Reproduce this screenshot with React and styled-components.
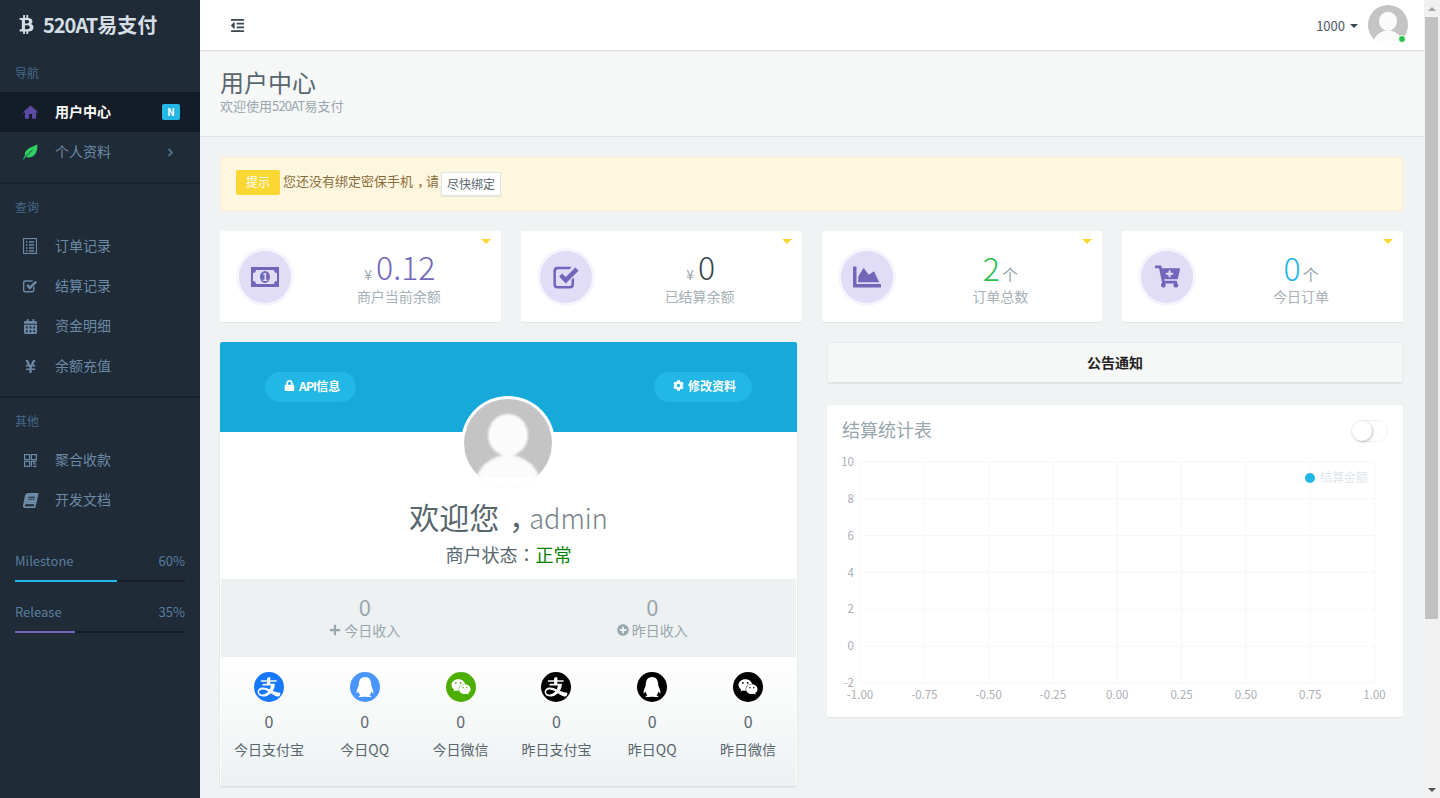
import React from "react";
import styled, { createGlobalStyle } from "styled-components";
import {
  FaBtc,
  FaCalendarAlt,
  FaYenSign,
  FaBook,
  FaAngleRight,
  FaOutdent,
  FaChartArea,
  FaCartPlus,
  FaLock,
  FaCog,
  FaPlus,
  FaPlusCircle,
  FaWeixin,
  FaQq,
} from "react-icons/fa";
import { MdHome } from "react-icons/md";
import { AiFillAlipayCircle } from "react-icons/ai";

const SANS = `"Noto Sans CJK SC", "Noto Sans", sans-serif`;

const GlobalStyle = createGlobalStyle`
  html, body { height: 100%; overflow: hidden; }
  body {
    margin: 0;
    background: #eff3f4;
    font-family: ${SANS};
    font-size: 14px;
    color: #58666e;
  }
`;

const Viewport = styled.div`
  display: flex;
  height: 100vh;
`;

const Page = styled.div`
  flex: 1;
  min-width: 0;
  overflow: hidden;
`;

const Layout = styled.div`
  display: flex;
  min-height: 1014px;
`;

/* fake window scrollbar */
const Rail = styled.div`
  width: 16px;
  flex: none;
  display: flex;
  flex-direction: column;
  align-items: center;
  background: #f1f1f1;
`;

const RailArrow = styled.span`
  height: 17px;
  flex: none;
  display: flex;
  align-items: center;
  &::before {
    content: "";
    border-left: 4px solid transparent;
    border-right: 4px solid transparent;
    border-bottom: ${(p) => (p.$up ? "4px solid #a3a3a3" : "none")};
    border-top: ${(p) => (p.$up ? "none" : "4px solid #505050")};
  }
`;

const RailThumb = styled.span`
  width: 13px;
  height: 602px;
  flex: none;
  margin-right: 1px;
  background: #c1c1c1;
`;

const RailSpace = styled.span`
  flex: 1;
`;

const Latin = styled.span`
  letter-spacing: ${(p) => p.$track || -0.8}px;
`;

/* sidebar */
const Sidebar = styled.aside`
  width: 200px;
  flex: none;
  background: #1f2b36;
  color: #6c89a6;
`;

const Logo = styled.div`
  height: 50px;
  box-sizing: border-box;
  padding: 0 0 2px 17px;
  display: flex;
  align-items: center;
  gap: 7px;
  font-size: 20px;
  font-weight: 700;
  color: #d5dee5;
  svg {
    font-size: 19px;
  }
`;

const NavLabel = styled.div`
  height: 42px;
  padding: 13px 0 0 15px;
  box-sizing: border-box;
  font-size: 12px;
  line-height: 20px;
  color: #47698a;
`;

const NavGroup = styled.nav`
  border-bottom: ${(p) => (p.$divider ? "2px solid #17212a" : "none")};
  padding-bottom: ${(p) => (p.$divider ? "10px" : "0")};
`;

const NavItem = styled.div`
  height: 40px;
  display: flex;
  align-items: center;
  background: ${(p) => (p.$active ? "#141d27" : "transparent")};
  color: ${(p) => (p.$active ? "#fff" : "#6c89a6")};
  font-weight: ${(p) => (p.$active ? 700 : 400)};
  font-size: 14px;
`;

const NavIcon = styled.span`
  width: 55px;
  flex: none;
  display: flex;
  justify-content: center;
  padding-left: 5px;
  box-sizing: border-box;
  color: ${(p) => p.$color || "#6c89a6"};
  font-size: 15px;
`;

const SlantedIcon = styled.span`
  display: flex;
  transform: skewX(-12deg);
`;

const NavText = styled.span`
  flex: 1;
  padding-bottom: 3px;
`;

const NavBadge = styled.span`
  width: 18px;
  height: 16px;
  margin-right: 20px;
  border-radius: 2px;
  background: #23b7e5;
  color: #fff;
  font-size: 10px;
  font-weight: 700;
  line-height: 16px;
  text-align: center;
`;

const NavArrow = styled.span`
  display: flex;
  margin-right: 23px;
  font-size: 13px;
  color: #4d6b88;
`;

const Progress = styled.div`
  padding: 0 15px;
  margin-bottom: 20px;
`;

const ProgressRow = styled.div`
  display: flex;
  justify-content: space-between;
  font-size: 13px;
  line-height: 20px;
  margin-bottom: 9px;
  color: #5a7d9f;
`;

const ProgressTrack = styled.div`
  height: 2px;
  background: #141d27;
`;

const ProgressFill = styled.div`
  height: 100%;
  background: ${(p) => p.$color};
`;

const Sidewidgets = styled.div`
  padding-top: 31px;
`;

/* main */
const Main = styled.main`
  flex: 1;
  min-width: 0;
`;

const Topbar = styled.header`
  height: 50px;
  background: #fff;
  box-shadow: 0 1px 2px rgba(0, 0, 0, 0.14);
  display: flex;
  align-items: center;
  padding: 0 16px 0 30px;
  position: relative;
`;

const MenuToggle = styled.span`
  display: flex;
  font-size: 15px;
  color: #3a4650;
  flex: 1;
`;

const UserName = styled.span`
  font-size: 13px;
  color: #4c5964;
`;

const Caret = styled.span`
  width: 0;
  height: 0;
  margin: 1px 10px 0 5px;
  border-left: 4px solid transparent;
  border-right: 4px solid transparent;
  border-top: 4px solid #3a4650;
`;

const TopAvatar = styled.span`
  position: relative;
  display: block;
  width: 40px;
  height: 40px;
`;

const OnlineDot = styled.span`
  position: absolute;
  right: 2px;
  bottom: 2px;
  width: 8px;
  height: 8px;
  border: 1px solid #fff;
  box-sizing: border-box;
  border-radius: 50%;
  background: #27c24c;
`;

const PageHeader = styled.div`
  height: 87px;
  box-sizing: border-box;
  background: #f6f8f8;
  border-bottom: 1px solid #dee5e7;
  padding: 16px 20px 0;
`;

const PageTitle = styled.h1`
  margin: 0;
  font-size: 24px;
  font-weight: 400;
  line-height: 32px;
  color: #58666e;
`;

const PageSub = styled.div`
  font-size: 13px;
  line-height: 15px;
  color: #98a6ad;
`;

const Content = styled.div`
  padding: 20px 21px 0 20px;
  display: flex;
  flex-direction: column;
  gap: 20px;
`;

const Alert = styled.div`
  height: 54px;
  box-sizing: border-box;
  display: flex;
  align-items: center;
  padding: 0 15px;
  border: 1px solid #fdeed0;
  border-radius: 3px;
  background: #fff6e0;
  color: #8a6d3b;
  font-size: 13px;
`;

const AlertText = styled.span`
  margin-bottom: 7px;
`;

const AlertTag = styled.span`
  width: 44px;
  height: 25px;
  margin-right: 3px;
  margin-top: -3px;
  border-radius: 2px;
  background: #fad733;
  color: #fff;
  font-size: 12px;
  line-height: 23px;
  text-align: center;
`;

const AlertButton = styled.span`
  margin-left: 2px;
  height: 22px;
  padding: 0 5px;
  border: 1px solid #dee5e7;
  background: #fff;
  color: #58666e;
  font-size: 12px;
  line-height: 22px;
  box-shadow: 0 1px 1px rgba(90, 90, 90, 0.1);
`;

/* the reference sets its comma in the middle of the cell, low on the line */
const Comma = styled.span`
  padding-left: 0.32em;
  letter-spacing: -0.32em;
`;

const Colon = styled.span`
  font-family: "Noto Sans CJK TC", sans-serif;
`;

const StatGrid = styled.div`
  display: grid;
  grid-template-columns: repeat(4, 1fr);
  gap: 20px;
`;

const StatCard = styled.div`
  position: relative;
  height: 91px;
  display: flex;
  align-items: center;
  padding-left: 19px;
  background: #fff;
  border-radius: 2px;
  box-shadow: 0 1px 1px rgba(0, 0, 0, 0.05);
`;

const StatFlag = styled.span`
  position: absolute;
  top: 8px;
  right: 10px;
  width: 0;
  height: 0;
  border-left: 5px solid transparent;
  border-right: 5px solid transparent;
  border-top: 5px solid #fad733;
`;

const StatCircle = styled.div`
  width: 52px;
  height: 52px;
  flex: none;
  border-radius: 50%;
  background: #e1ddf7;
  box-shadow: 0 0 0 3px #f6f5fd;
  color: #7266ba;
  display: flex;
  align-items: center;
  justify-content: center;
  font-size: 28px;
`;

const StatBody = styled.div`
  flex: 1;
  text-align: center;
  padding-left: 6px;
`;

const StatValue = styled.div`
  font-size: 32px;
  font-weight: 300;
  line-height: 36px;
  color: ${(p) => p.$color};
`;

const StatPrefix = styled.span`
  font-size: 14px;
  font-weight: 400;
  color: #98a6ad;
  margin: 0 4px 0 2px;
`;

const StatSuffix = styled.span`
  font-size: 16px;
  font-weight: 400;
  color: #98a6ad;
  margin-left: 2px;
`;

const StatLabel = styled.div`
  font-size: 14px;
  line-height: 18px;
  margin-top: -5px;
  color: #a6b0b6;
`;

const Columns = styled.div`
  display: grid;
  grid-template-columns: 577px 576px;
  gap: 30px;
  align-items: start;
`;

const ProfileCard = styled.section`
  position: relative;
  height: 444px;
  display: flex;
  flex-direction: column;
  background: #fff;
  box-shadow: 0 1px 2px rgba(0, 0, 0, 0.12);
  border-radius: 2px;
`;

const ProfileBanner = styled.div`
  height: 90px;
  flex: none;
  padding: 30px 45px 0;
  box-sizing: border-box;
  background: #17a9da;
  display: flex;
  justify-content: space-between;
  align-items: flex-start;
  border-radius: 2px 2px 0 0;
`;

const PillButton = styled.span`
  height: 30px;
  padding: 0 16px 3px 19px;
  box-sizing: border-box;
  display: flex;
  align-items: center;
  gap: 4px;
  border-radius: 15px;
  background: #23b7e5;
  color: #fff;
  font-size: 12px;
  font-weight: 700;
  svg {
    font-size: 11px;
  }
`;

const ProfileAvatar = styled.div`
  position: absolute;
  left: 241px;
  top: 54px;
  width: 94px;
  height: 94px;
  border-radius: 50%;
  background: #fff;
  padding: 3px;
  box-sizing: border-box;
  svg {
    display: block;
  }
`;

const Welcome = styled.div`
  margin-top: 64px;
  text-align: center;
  font-size: 30px;
  line-height: 40px;
  color: #58666e;
`;

const WelcomeName = styled.span`
  font-size: 27px;
  font-weight: 300;
  color: #76838b;
`;

const StatusLine = styled.div`
  text-align: center;
  font-size: 18px;
  line-height: 30px;
  margin-top: 1px;
  margin-bottom: 10px;
`;

const StatusOk = styled.span`
  color: #008000;
`;

const IncomeRow = styled.div`
  height: 78px;
  flex: none;
  margin: 0 1px;
  display: grid;
  grid-template-columns: 1fr 1fr;
  background: #edf1f2;
  text-align: center;
  color: #98a6ad;
`;

const IncomeCell = styled.div`
  padding-top: 15px;
`;

const IncomeValue = styled.div`
  font-size: 22px;
  line-height: 25px;
`;

const IncomeLabel = styled.div`
  display: flex;
  align-items: center;
  justify-content: center;
  gap: 3px;
  margin-top: 1px;
  font-size: 14px;
  line-height: 20px;
  svg {
    font-size: 12px;
  }
`;

const ChannelRow = styled.div`
  flex: 1;
  margin: 0 1px;
  display: grid;
  grid-template-columns: repeat(6, 1fr);
  background: linear-gradient(#fff, #edf1f2);
  text-align: center;
`;

const ChannelCell = styled.div`
  padding-top: 15px;
  display: flex;
  flex-direction: column;
  align-items: center;
`;

const ChannelDisc = styled.span`
  width: 30px;
  height: 30px;
  border-radius: 50%;
  display: flex;
  align-items: center;
  justify-content: center;
  overflow: hidden;
  background: ${(p) => (p.$cutout ? "transparent" : p.$color)};
  color: ${(p) => (p.$cutout ? p.$color : "#fff")};
  font-size: ${(p) => (p.$cutout ? 36 : 20)}px;
  svg {
    flex: none;
  }
`;

const ChannelValue = styled.div`
  font-size: 16px;
  line-height: 20px;
  margin-top: 9px;
`;

const ChannelLabel = styled.div`
  font-size: 14px;
  line-height: 20px;
  margin-top: 8px;
`;

const SideColumn = styled.div`
  display: flex;
  flex-direction: column;
  gap: 21px;
`;

const NoticeBar = styled.div`
  height: 42px;
  background: #f6f8f8;
  border: 1px solid #e4eaec;
  border-bottom: 2px solid #dee5e7;
  box-sizing: border-box;
  border-radius: 2px;
  text-align: center;
  font-size: 14px;
  font-weight: 700;
  line-height: 38px;
  color: #222;
`;

const ChartCard = styled.section`
  height: 312px;
  background: #fff;
  border-radius: 2px;
  box-shadow: 0 1px 1px rgba(0, 0, 0, 0.05);
`;

const ChartHead = styled.div`
  height: 44px;
  box-sizing: border-box;
  padding: 10px 15px 0;
  display: flex;
  justify-content: space-between;
  align-items: flex-start;
`;

const ChartTitle = styled.h3`
  margin: 0;
  font-size: 18px;
  font-weight: 400;
  line-height: 28px;
  color: #98a6ad;
`;

const Toggle = styled.span`
  position: relative;
  width: 37px;
  height: 22px;
  margin-top: 5px;
  box-sizing: border-box;
  border: 1px solid #eef0f1;
  border-radius: 11px;
  background: #fff;
`;

const ToggleKnob = styled.span`
  position: absolute;
  left: 0;
  top: 0;
  width: 20px;
  height: 20px;
  border-radius: 50%;
  background: #fff;
  box-shadow: 1px 1px 3px rgba(0, 0, 0, 0.25);
`;

const ChartSvg = styled.svg`
  display: block;
  font-family: ${SANS};
`;

/* drawings */
const AvatarPic = ({ size }) => (
  <svg width={size} height={size} viewBox="0 0 88 88">
    <defs>
      <clipPath id={`clip${size}`}>
        <circle cx="44" cy="44" r="44" />
      </clipPath>
      <filter id={`soft${size}`}>
        <feGaussianBlur stdDeviation="0.9" />
      </filter>
    </defs>
    <g clipPath={`url(#clip${size})`}>
      <rect width="88" height="88" fill="#c4c4c4" />
      <g filter={`url(#soft${size})`} fill="#fbfbfb">
        <ellipse cx="44" cy="36" rx="20" ry="21" />
        <ellipse cx="44" cy="88" rx="33" ry="32" />
      </g>
      <rect y="79" width="88" height="9" fill="#fff" />
    </g>
  </svg>
);

const CheckSquareIcon = ({ size }) => (
  <svg width={size} height={size} viewBox="0 0 28 28" fill="currentColor">
    <path d="M21 14.500v6a3.500 3.500 0 0 1-3.500 3.500h-11A3.500 3.500 0 0 1 3 20.500v-12A3.500 3.500 0 0 1 6.500 5h11c.5 0 1 .1 1.400.3l-1.900 1.900h-9.500A2.500 2.500 0 0 0 5.200 9.700v10.600a1.500 1.500 0 0 0 1.500 1.500h10.600a1.500 1.500 0 0 0 1.500-1.500v-3.800z" />
    <path d="M8 13.500l2.600-2.600 3.200 3.200L22.200 5.700l2.800 2.800-11.200 11.200z" />
  </svg>
);

const LeafIcon = () => (
  <svg width="15" height="16" viewBox="0 0 15 16" fill="currentColor">
    <path d="M14.500 0.500C14.500 8 12 13 6 13.500C4.500 13.600 3.500 13.200 2.800 12.600L0.900 15.500L0 15L2 11.500C0.800 6 7 3.500 14.500 0.500z" />
    <path d="M2.800 12.600L9.500 6" stroke="#1f2b36" strokeWidth="0.8" fill="none" />
  </svg>
);

const ListIcon = () => (
  <svg width="14" height="16" viewBox="0 0 14 16" fill="none" stroke="currentColor">
    <rect x="0.500" y="0.500" width="13" height="15" strokeWidth="1.200" />
    <path d="M3 4h1.500M6 4h5M3 7h1.500M6 7h5M3 10h1.500M6 10h5M3 13h1.500M6 13h5" strokeWidth="1.300" />
  </svg>
);

const QrIcon = () => (
  <svg width="13" height="13" viewBox="0 0 13 13" fill="none" stroke="currentColor" strokeWidth="1.200">
    <rect x="0.600" y="0.600" width="5" height="5" />
    <rect x="7.400" y="0.600" width="5" height="5" />
    <rect x="0.600" y="7.400" width="5" height="5" />
    <path d="M7.400 12.500V7.400h2.500v2.600h2.600M10.500 7.400h2M9 12.400h3.500" />
  </svg>
);

const MoneyIcon = () => (
  <svg width="28" height="20" viewBox="0 0 28 20">
    <rect width="28" height="20" fill="#7266ba" />
    <path d="M5 3h18a3 3 0 0 0 3 3v8a3 3 0 0 0-3 3H5a3 3 0 0 0-3-3V6a3 3 0 0 0 3-3z" fill="#e1ddf7" />
    <ellipse cx="14" cy="10" rx="5" ry="6" fill="#7266ba" />
    <text x="14" y="13.500" textAnchor="middle" fontSize="10" fontWeight="700" fill="#e1ddf7">
      1
    </text>
  </svg>
);

const X_LABELS = ["-1.00", "-0.75", "-0.50", "-0.25", "0.00", "0.25", "0.50", "0.75", "1.00"];
const Y_LABELS = ["10", "8", "6", "4", "2", "0", "-2"];

const SettleChart = () => {
  const left = 33;
  const right = 547.5;
  const top = 13;
  const bottom = 234;
  const stepX = (right - left) / 8;
  const stepY = (bottom - top) / 6;
  return (
    <ChartSvg width="576" height="268" viewBox="0 0 576 268">
      {X_LABELS.map((label, i) => (
        <g key={label}>
          <line x1={left + stepX * i} x2={left + stepX * i} y1={top} y2={bottom} stroke="#f5f6f7" />
          <text x={left + stepX * i} y={250} fontSize="11.5" textAnchor="middle" fill="#aaaeb4">
            {label}
          </text>
        </g>
      ))}
      {Y_LABELS.map((label, i) => (
        <g key={label}>
          <line x1={left} x2={right} y1={top + stepY * i} y2={top + stepY * i} stroke="#f5f6f7" />
          <text x={left - 6} y={top + stepY * i + 4} fontSize="11.5" textAnchor="end" fill="#aaaeb4">
            {label}
          </text>
        </g>
      ))}
      <circle cx="483" cy="29" r="5" fill="#23b7e5" />
      <text x="493" y="33" fontSize="12" fill="#e0e6ec">
        结算金额
      </text>
    </ChartSvg>
  );
};

const STATS = [
  { icon: <MoneyIcon />, prefix: "¥", value: "0.12", color: "#7266ba", label: "商户当前余额" },
  { icon: <CheckSquareIcon size={32} />, prefix: "¥", value: "0", color: "#3a4650", label: "已结算余额" },
  { icon: <FaChartArea />, value: "2", suffix: "个", color: "#27c24c", label: "订单总数" },
  { icon: <FaCartPlus size={25} />, value: "0", suffix: "个", color: "#23b7e5", label: "今日订单" },
];

const CHANNELS = [
  { kind: "ali", color: "#1677ff", label: "今日支付宝" },
  { kind: "qq", color: "#4a96ff", label: "今日QQ" },
  { kind: "wx", color: "#4caf00", label: "今日微信" },
  { kind: "ali", color: "#000", label: "昨日支付宝" },
  { kind: "qq", color: "#000", label: "昨日QQ" },
  { kind: "wx", color: "#000", label: "昨日微信" },
];

const ChannelIcon = ({ kind, color }) => {
  if (kind === "ali") {
    return (
      <ChannelDisc $cutout $color={color}>
        <AiFillAlipayCircle />
      </ChannelDisc>
    );
  }
  return <ChannelDisc $color={color}>{kind === "qq" ? <FaQq /> : <FaWeixin />}</ChannelDisc>;
};

export default function App() {
  return (
    <>
      <GlobalStyle />
      <Viewport>
        <Page>
          <Layout>
            <Sidebar>
              <Logo>
                <FaBtc />
                <span>
                  <Latin $track={-1}>520AT</Latin>易支付
                </span>
              </Logo>
              <NavGroup $divider>
                <NavLabel>导航</NavLabel>
                <NavItem $active>
                  <NavIcon $color="#5a4ba6">
                    <MdHome size={19} />
                  </NavIcon>
                  <NavText>用户中心</NavText>
                  <NavBadge>N</NavBadge>
                </NavItem>
                <NavItem>
                  <NavIcon $color="#2fcf63">
                    <LeafIcon />
                  </NavIcon>
                  <NavText>个人资料</NavText>
                  <NavArrow>
                    <FaAngleRight />
                  </NavArrow>
                </NavItem>
              </NavGroup>
              <NavGroup $divider>
                <NavLabel>查询</NavLabel>
                <NavItem>
                  <NavIcon>
                    <ListIcon />
                  </NavIcon>
                  <NavText>订单记录</NavText>
                </NavItem>
                <NavItem>
                  <NavIcon>
                    <CheckSquareIcon size={18} />
                  </NavIcon>
                  <NavText>结算记录</NavText>
                </NavItem>
                <NavItem>
                  <NavIcon>
                    <FaCalendarAlt />
                  </NavIcon>
                  <NavText>资金明细</NavText>
                </NavItem>
                <NavItem>
                  <NavIcon>
                    <FaYenSign />
                  </NavIcon>
                  <NavText>余额充值</NavText>
                </NavItem>
              </NavGroup>
              <NavGroup>
                <NavLabel>其他</NavLabel>
                <NavItem>
                  <NavIcon>
                    <QrIcon />
                  </NavIcon>
                  <NavText>聚合收款</NavText>
                </NavItem>
                <NavItem>
                  <NavIcon>
                    <SlantedIcon>
                      <FaBook />
                    </SlantedIcon>
                  </NavIcon>
                  <NavText>开发文档</NavText>
                </NavItem>
              </NavGroup>
              <Sidewidgets>
                <Progress>
                  <ProgressRow>
                    <span>Milestone</span>
                    <span>60%</span>
                  </ProgressRow>
                  <ProgressTrack>
                    <ProgressFill $color="#23b7e5" style={{ width: "60%" }} />
                  </ProgressTrack>
                </Progress>
                <Progress>
                  <ProgressRow>
                    <span>Release</span>
                    <span>35%</span>
                  </ProgressRow>
                  <ProgressTrack>
                    <ProgressFill $color="#7266ba" style={{ width: "35%" }} />
                  </ProgressTrack>
                </Progress>
              </Sidewidgets>
            </Sidebar>

            <Main>
              <Topbar>
                <MenuToggle>
                  <FaOutdent />
                </MenuToggle>
                <UserName>1000</UserName>
                <Caret />
                <TopAvatar>
                  <AvatarPic size={40} />
                  <OnlineDot />
                </TopAvatar>
              </Topbar>
              <PageHeader>
                <PageTitle>用户中心</PageTitle>
                <PageSub>
                  欢迎使用<Latin>520AT</Latin>易支付
                </PageSub>
              </PageHeader>
              <Content>
                <Alert>
                  <AlertTag>提示</AlertTag>
                  <AlertText>
                    您还没有绑定密保手机<Comma>，</Comma>请
                  </AlertText>
                  <AlertButton>尽快绑定</AlertButton>
                </Alert>

                <StatGrid>
                  {STATS.map((s) => (
                    <StatCard key={s.label}>
                      <StatFlag />
                      <StatCircle>{s.icon}</StatCircle>
                      <StatBody>
                        <StatValue $color={s.color}>
                          {s.prefix && <StatPrefix>{s.prefix}</StatPrefix>}
                          {s.value}
                          {s.suffix && <StatSuffix>{s.suffix}</StatSuffix>}
                        </StatValue>
                        <StatLabel>{s.label}</StatLabel>
                      </StatBody>
                    </StatCard>
                  ))}
                </StatGrid>

                <Columns>
                  <ProfileCard>
                    <ProfileBanner>
                      <PillButton>
                        <FaLock />
                        <span>
                          <Latin>API</Latin>信息
                        </span>
                      </PillButton>
                      <PillButton>
                        <FaCog />
                        修改资料
                      </PillButton>
                    </ProfileBanner>
                    <ProfileAvatar>
                      <AvatarPic size={88} />
                    </ProfileAvatar>
                    <Welcome>
                      欢迎您<Comma>，</Comma>
                      <WelcomeName>admin</WelcomeName>
                    </Welcome>
                    <StatusLine>
                      商户状态<Colon>：</Colon>
                      <StatusOk>正常</StatusOk>
                    </StatusLine>
                    <IncomeRow>
                      <IncomeCell>
                        <IncomeValue>0</IncomeValue>
                        <IncomeLabel>
                          <FaPlus />
                          今日收入
                        </IncomeLabel>
                      </IncomeCell>
                      <IncomeCell>
                        <IncomeValue>0</IncomeValue>
                        <IncomeLabel>
                          <FaPlusCircle />
                          昨日收入
                        </IncomeLabel>
                      </IncomeCell>
                    </IncomeRow>
                    <ChannelRow>
                      {CHANNELS.map((c) => (
                        <ChannelCell key={c.label}>
                          <ChannelIcon kind={c.kind} color={c.color} />
                          <ChannelValue>0</ChannelValue>
                          <ChannelLabel>{c.label}</ChannelLabel>
                        </ChannelCell>
                      ))}
                    </ChannelRow>
                  </ProfileCard>

                  <SideColumn>
                    <NoticeBar>公告通知</NoticeBar>
                    <ChartCard>
                      <ChartHead>
                        <ChartTitle>结算统计表</ChartTitle>
                        <Toggle>
                          <ToggleKnob />
                        </Toggle>
                      </ChartHead>
                      <SettleChart />
                    </ChartCard>
                  </SideColumn>
                </Columns>
              </Content>
            </Main>
          </Layout>
        </Page>
        <Rail>
          <RailArrow $up />
          <RailThumb />
          <RailSpace />
          <RailArrow />
        </Rail>
      </Viewport>
    </>
  );
}
